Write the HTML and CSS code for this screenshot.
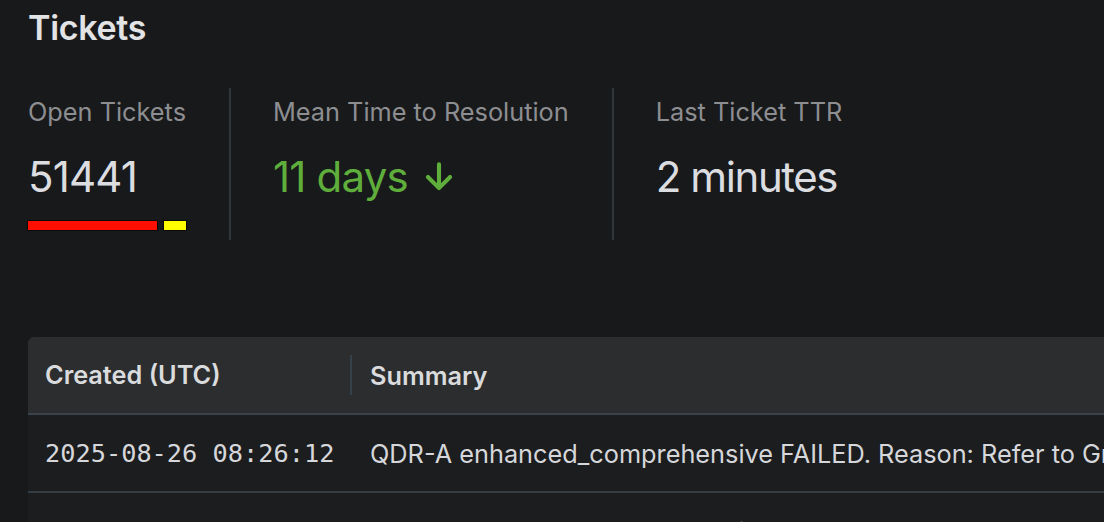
FILE: index.html
```html
<!DOCTYPE html>
<html>
<head>
<meta charset="utf-8">
<link rel="stylesheet" href="styles.css">
</head>
<body>
<div class="panel">
  <h1 class="title">Tickets</h1>
  <div class="stats">
    <div class="stat first">
      <div class="stat-label">Open Tickets</div>
      <div class="stat-value">51441</div>
      <div class="bars"><span class="bar red"></span><span class="bar yellow"></span></div>
    </div>
    <div class="stat">
      <div class="stat-label">Mean Time to Resolution</div>
      <div class="stat-value green">11 days <svg class="arrow" viewBox="0 0 24 24" width="38" height="38"><path d="M12 4v15M5 12l7 7 7-7" fill="none" stroke="currentColor" stroke-width="2.6" stroke-linecap="round" stroke-linejoin="round"/></svg></div>
    </div>
    <div class="stat">
      <div class="stat-label">Last Ticket TTR</div>
      <div class="stat-value tight">2 minutes</div>
    </div>
  </div>
  <div class="table">
    <div class="thead">
      <div class="th col-created">Created (UTC)</div>
      <div class="th col-summary">Summary</div>
    </div>
    <div class="tr">
      <div class="td col-created mono">2025-08-26 08:26:12</div>
      <div class="td col-summary">QDR-A enhanced_comprehensive FAILED. Reason: Refer to Grafana dashboard for details</div>
    </div>
    <div class="tr">
      <div class="td col-created mono">2025-08-26 08:26:12</div>
      <div class="td col-summary">QDR-A enhanced_comprehensive FAILED. Reason: Refer to Grafana dashboard for details</div>
    </div>
  </div>
</div>
</body>
</html>
```
FILE: styles.css
```css
html, body {
  margin: 0;
  padding: 0;
  background: #18191b;
  overflow: hidden;
}
body {
  width: 1104px;
  height: 522px;
  font-family: Inter, "Noto Sans", sans-serif;
  color: #d8d9dc;
}
.panel {
  padding: 0 0 0 28px;
}
.title {
  margin: 0;
  padding-top: 8px;
  font-size: 34px;
  font-weight: 600;
  line-height: 40px;
  color: #e2e3e5;
  letter-spacing: -0.3px;
}
.stats {
  display: flex;
  margin-top: 40px;
  height: 152px;
}
.stat {
  padding: 0 43px 0 42px;
  border-left: 2px solid #30353a;
}
.stat.first {
  padding-left: 0;
  border-left: none;
}
.stat-label {
  margin-top: 9px;
  font-size: 25.3px;
  line-height: 30px;
  color: #8d8e91;
}
.stat-value {
  margin-top: 25px;
  font-size: 42px;
  line-height: 50px;
  letter-spacing: -0.8px;
  color: #dcdde0;
  display: flex;
  align-items: center;
}
.stat-value.tight {
  letter-spacing: -1.4px;
}
.stat-value.green {
  color: #5fae3c;
}
.arrow {
  margin-left: 12px;
}
.bars {
  display: flex;
  gap: 7px;
  margin-top: 19px;
}
.bar {
  height: 9px;
  box-shadow: 0 0 0 1px #0a0a0a;
}
.bar.red {
  width: 129px;
  background: #ff0f00;
}
.bar.yellow {
  width: 22px;
  background: #ffff00;
}
.table {
  margin-top: 97px;
  background: #1c1d1f;
  border-top-left-radius: 6px;
  overflow: hidden;
}
.thead {
  display: flex;
  height: 76px;
  background: #2c2d2e;
  border-bottom: 2px solid #3a434b;
  align-items: center;
}
.th {
  font-size: 25.3px;
  font-weight: 600;
  color: #dadbdd;
  white-space: nowrap;
}
.col-created {
  width: 324px;
  flex: none;
  padding-left: 17px;
  box-sizing: border-box;
}
.th.col-created {
  height: 40px;
  line-height: 40px;
  border-right: 2px solid #364048;
}
.col-summary {
  padding-left: 18px;
  white-space: nowrap;
}
.tr {
  display: flex;
  height: 76px;
  align-items: center;
  border-bottom: 2px solid #343c44;
}
.td {
  font-size: 25.3px;
  color: #d6d7da;
  white-space: nowrap;
}
.mono {
  font-family: "DejaVu Sans Mono", monospace;
  font-size: 25.3px;
}
```
